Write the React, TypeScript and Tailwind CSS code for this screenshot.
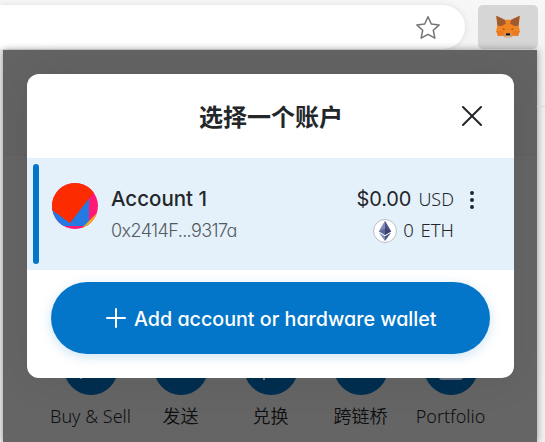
import React from "react";

const latin = "font-[Inter,'Noto_Sans_CJK_SC',sans-serif] [font-feature-settings:'cv11'_1]";

function Fox() {
  return (
    <svg className="h-6 w-6" viewBox="0 0 24 24">
      <path d="M0.3 0.8 L8.5 4.8 H15.5 L23.7 0.8 L22.8 11 L23.8 16 L22 21 L17.5 20.6 L14 22.8 H10 L6.5 20.6 L2 21 L0.2 16 L1.2 11Z" fill="#f38422" />
      <path d="M0.3 0.8 L8.7 4.8 L10 8.8 L5 11.2 L1.4 10.5 L1 6Z M23.7 0.8 L15.3 4.8 L14 8.8 L19 11.2 L22.6 10.5 L23 6Z" fill="#a05a2f" />
      <path d="M0.2 16 H8 L7 20.6 L2 21Z M23.8 16 H16 L17 20.6 L22 21Z" fill="#ec7821" />
      <path d="M6.8 13.2 L9.4 14.2 L7 14.9Z M17.2 13.2 L14.6 14.2 L17 14.9Z" fill="#8a4d30" />
      <path d="M8.5 19.2 L10 18 H14 L15.5 19.2 L14 22.8 H10Z" fill="#d4c3b4" />
      <path d="M9.9 18.2 H14.1 L14.4 20.4 H9.6Z" fill="#17120f" />
    </svg>
  );
}

function Toolbar() {
  return (
    <header className="flex h-[50px] bg-gradient-to-b from-[#f7f7f7] to-[#f3f3f3] pt-[5px]">
      <div className="flex h-11 w-[465px] items-center justify-end rounded-r-full bg-white pr-[24px] shadow-[0_0_7px_rgba(0,0,0,0.1)]">
        <svg className="mt-0.5 h-[26px] w-[26px]" viewBox="0 0 26 26" fill="none" stroke="#757575" strokeWidth="1.5" strokeLinejoin="round">
          <path d="M13 1.7 L16.3 9 L24.2 9.9 L18.3 15.3 L19.9 23.2 L13 19.3 L6.1 23.2 L7.7 15.3 L1.8 9.9 L9.7 9Z" />
        </svg>
      </div>
      <div className="ml-[13px] flex h-11 w-[60px] items-center justify-center rounded-[5px] bg-[#d6d6d6]">
        <Fox />
      </div>
    </header>
  );
}

function Action({ label, children }: { label: string; children?: React.ReactNode }) {
  return (
    <div className="flex w-[90px] flex-col items-center">
      <div className="flex h-[54px] w-[54px] items-center justify-center rounded-full bg-[#002f50]">{children}</div>
      <span className="mt-[9px] mr-px whitespace-nowrap text-[18px] leading-6 text-[#0e0f10]">{label}</span>
    </div>
  );
}

function Wallet() {
  return (
    <div className="h-[392px] w-[534px] overflow-hidden bg-[#656565] shadow-[0_0_7px_rgba(0,0,0,0.4)]">
      <div className="h-[106px] border-b border-[#606060] bg-[#636363]" />
      <div className="flex justify-center pt-[185px] pl-0.5 font-['Noto_Sans','Noto_Sans_CJK_SC',sans-serif] font-[350]">
        <Action label="Buy & Sell">
          <span className="mt-[18px] mr-[21px] h-1 w-0.5 bg-[#777]" />
        </Action>
        <Action label="发送" />
        <Action label="兑换">
          <span className="mt-[19px] mr-[14px] h-1 w-0.5 bg-[#777]" />
        </Action>
        <Action label="跨链桥" />
        <Action label="Portfolio">
          <span className="h-6 w-6 rounded-[3px] border-2 border-[#657582]" />
        </Action>
      </div>
    </div>
  );
}

function Avatar() {
  return (
    <svg className="h-[46px] w-[46px] shrink-0 overflow-hidden rounded-full" viewBox="0 0 46 46">
      <rect width="46" height="46" fill="#ff1875" />
      <path d="M0 22 L37 10 V43 H0Z" fill="#2479e3" />
      <path d="M46 29 L29 46 H46Z" fill="#faad19" />
      <path d="M0 0 H46 L42 9 L18 40 L0 27Z" fill="#fc2b00" />
    </svg>
  );
}

function EthIcon() {
  return (
    <svg className="h-6 w-6 shrink-0" viewBox="0 0 24 24">
      <circle cx="12" cy="12" r="11.5" fill="#fff" stroke="#b8bec4" />
      <path d="M12 1.8 L5.8 12.2 L12 16Z" fill="#828bb8" />
      <path d="M12 1.8 L18.2 12.2 L12 16Z" fill="#4b5286" />
      <path d="M5.8 12.2 L12 9.5 V16Z" fill="#5f689b" />
      <path d="M18.2 12.2 L12 9.5 V16Z" fill="#3c416d" />
      <path d="M5.8 13.6 L12 17.3 V22Z" fill="#828bb8" />
      <path d="M18.2 13.6 L12 17.3 V22Z" fill="#4b5286" />
    </svg>
  );
}

function AccountRow() {
  return (
    <div className="flex h-28 items-start bg-[#e5f1fa] pl-1.5 text-[#24272a]">
      <div className="mt-1.5 h-[100px] w-1.5 rounded-full bg-[#0376c9]" />
      <div className="mt-[25px] ml-[13px]">
        <Avatar />
      </div>
      <div className="mt-[25px] ml-[13px] w-[150px] whitespace-nowrap">
        <div className="text-[20.5px] leading-8 font-medium">Account 1</div>
        <div className="text-[18px] leading-8 font-[350] tracking-[-0.6px] text-[#535a61]">0x2414F...9317a</div>
      </div>
      <div className="mt-[25px] ml-auto flex flex-col items-end whitespace-nowrap">
        <div className="flex items-baseline leading-8">
          <span className="text-[20px] tracking-[-0.1px]">$0.00</span>
          <span className="ml-[7px] font-['Noto_Sans',sans-serif] text-[18px] font-[350]">USD</span>
        </div>
        <div className="flex h-8 items-center font-['Noto_Sans',sans-serif] text-[18.5px] font-[350]">
          <EthIcon />
          <span className="-mt-0.5 ml-1.5 [word-spacing:2px]">0 ETH</span>
        </div>
      </div>
      <svg className="mt-[30px] mr-[32px] ml-[8px] h-6 w-5" viewBox="0 0 20 24" fill="#24272a">
        <circle cx="10" cy="5" r="2" />
        <circle cx="10" cy="12" r="2" />
        <circle cx="10" cy="19" r="2" />
      </svg>
    </div>
  );
}

function AccountDialog() {
  return (
    <section className={`absolute top-[74px] left-[27px] h-[304px] w-[487px] overflow-hidden rounded-xl bg-white shadow-[0_2px_40px_rgba(0,0,0,0.08)] ${latin}`}>
      <div className="flex h-[84px] items-center justify-end pr-[32px]">
        <h1 className="mt-[3px] mr-[119px] text-[24px] leading-8 font-bold text-[#24272a]">选择一个账户</h1>
        <svg className="h-5 w-5" viewBox="0 0 20 20" stroke="#24272a" strokeWidth="2" strokeLinecap="round">
          <path d="M1 1 L19 19 M19 1 L1 19" />
        </svg>
      </div>
      <AccountRow />
      <div className="px-6 pt-3">
        <button className="flex h-[72px] w-full items-center rounded-full bg-[#0376c9] pl-[55px] text-white shadow-[0_3px_12px_rgba(3,118,201,0.2)]">
          <svg className="h-5 w-5" viewBox="0 0 20 20" stroke="currentColor" strokeWidth="2" strokeLinecap="round">
            <path d="M10 1 V19 M1 10 H19" />
          </svg>
          <span className="mt-[3px] ml-2 text-[19.7px] font-medium whitespace-nowrap">Add account or hardware wallet</span>
        </button>
      </div>
    </section>
  );
}

export default function App() {
  return (
    <main className="relative h-[442px] w-[545px] overflow-hidden bg-[#f0f0f0]">
      <Toolbar />
      <div className="relative flex pl-[3px]">
        <Wallet />
        <div className="h-[57px] w-2 border-b border-[#d9d9d9] bg-transparent" />
      </div>
      <AccountDialog />
    </main>
  );
}
